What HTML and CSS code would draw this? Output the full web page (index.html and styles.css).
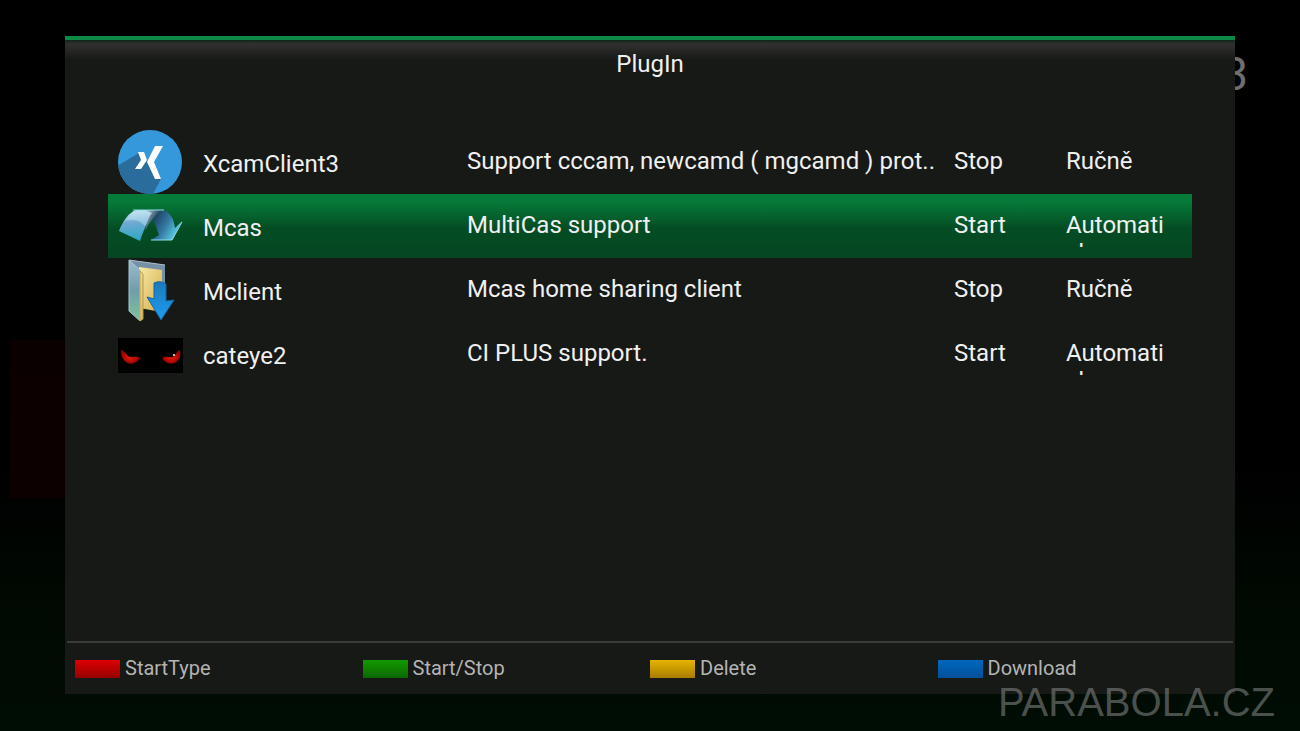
FILE: index.html
```
<!DOCTYPE html>
<html lang="cs">
<head>
    <meta charset="UTF-8">
    <meta name="viewport" content="width=device-width, initial-scale=1.0">
    <title>PlugIn</title>
    <link rel="stylesheet" href="styles.css">
</head>
<body>
    <div class="channel">3</div>

    <main class="panel">
        <h1 class="title">PlugIn</h1>

        <table class="plugins">
            <colgroup>
                <col class="col-icon">
                <col class="col-name">
                <col class="col-desc">
                <col class="col-state">
                <col class="col-type">
            </colgroup>
            <tbody>
                <tr>
                    <td class="icon">
                        <svg width="66" height="64" viewBox="1 0 66 64">
                            <defs>
                                <clipPath id="disc"><circle cx="33" cy="32" r="32"/></clipPath>
                            </defs>
                            <circle cx="33" cy="32" r="32" fill="#3498db"/>
                            <path clip-path="url(#disc)" fill="#2a6c9b" d="M22 23L0 36V64H36L44 49L31 31Z"/>
                            <path fill="#fff" d="M21 22h6l3 8-6 9h-6l6-9zM38 16h8l-9 16 7 17h-6l-8-17z"/>
                        </svg>
                    </td>
                    <td class="name">XcamClient3</td>
                    <td><div class="cell">Support cccam, newcamd ( mgcamd ) prot..</div></td>
                    <td><div class="cell">Stop</div></td>
                    <td><div class="cell type">Ručně</div></td>
                </tr>
                <tr class="selected">
                    <td class="icon">
                        <svg width="66" height="64" viewBox="0 0 66 64">
                            <defs>
                                <linearGradient id="bandLeft" x1="0.4" y1="0" x2="0.5" y2="1">
                                    <stop offset="0" stop-color="#c3e2f0"/>
                                    <stop offset="0.4" stop-color="#6fa9d2"/>
                                    <stop offset="1" stop-color="#27a9c2"/>
                                </linearGradient>
                                <linearGradient id="bandFold" x1="0" y1="0" x2="1" y2="0.6">
                                    <stop offset="0" stop-color="#c9ddea"/>
                                    <stop offset="0.6" stop-color="#2b4c66"/>
                                    <stop offset="1" stop-color="#163347"/>
                                </linearGradient>
                                <linearGradient id="bandRight" x1="0" y1="0.2" x2="0.9" y2="0.7">
                                    <stop offset="0" stop-color="#16344f"/>
                                    <stop offset="0.55" stop-color="#3579a4"/>
                                    <stop offset="1" stop-color="#58d3e3"/>
                                </linearGradient>
                            </defs>
                            <path fill="url(#bandLeft)" d="M1 37C5 27 10 19 18 16H38C31 23 26 35 22 47Z"/>
                            <path fill="#c5eaf5" opacity="0.45" d="M7 27C15 24 23 27 27 32L36 17H18C14 18 11 22 7 27Z"/>
                            <path fill="url(#bandFold)" d="M26 16H46C38 20 32 27 27 37C29 28 31 22 34 19Z"/>
                            <path fill="url(#bandRight)" d="M35 26C37 21 41 18 46 16C53 19 56 26 57 34L64 27L54 46H33L41 41C39 36 38 31 35 26Z"/>
                            <path fill="none" stroke="#8de1ee" d="M15 16H46M33 46H54L64 28"/>
                        </svg>
                    </td>
                    <td class="name">Mcas</td>
                    <td><div class="cell">MultiCas support</div></td>
                    <td><div class="cell">Start</div></td>
                    <td><div class="cell type">Automaticky</div></td>
                </tr>
                <tr>
                    <td class="icon">
                        <svg width="66" height="64" viewBox="0 0 66 64">
                            <defs>
                                <linearGradient id="cover" x1="0" y1="0" x2="0" y2="1">
                                    <stop offset="0" stop-color="#9dbbd0"/>
                                    <stop offset="0.5" stop-color="#6f9dac"/>
                                    <stop offset="1" stop-color="#7cc79b"/>
                                </linearGradient>
                                <linearGradient id="paper" x1="0" y1="0" x2="1" y2="1">
                                    <stop offset="0" stop-color="#f6e9a4"/>
                                    <stop offset="1" stop-color="#d5ad4c"/>
                                </linearGradient>
                                <linearGradient id="arrow" x1="0" y1="0" x2="0" y2="1">
                                    <stop offset="0" stop-color="#1c79bd"/>
                                    <stop offset="1" stop-color="#1d9cf0"/>
                                </linearGradient>
                            </defs>
                            <path fill="#7690a5" d="M11 2L47 7V48L40 50L12 10Z"/>
                            <path fill="url(#paper)" d="M21 9L44 12V54L21 50Z"/>
                            <path fill="url(#cover)" stroke="#a9c8d0" d="M11 2L22 12V63L11 53Z"/>
                            <path fill="url(#paper)" stroke="#b99a50" d="M22 13L25 16V61L22 63Z"/>
                            <path fill="none" stroke="#a9c0d0" d="M11 2L47 7"/>
                            <path fill="url(#arrow)" stroke="#1565a8" d="M36 25Q42 22 48 26V43L56 42L43 62L29 39L36 41Z"/>
                        </svg>
                    </td>
                    <td class="name">Mclient</td>
                    <td><div class="cell">Mcas home sharing client</div></td>
                    <td><div class="cell">Stop</div></td>
                    <td><div class="cell type">Ručně</div></td>
                </tr>
                <tr>
                    <td class="icon">
                        <svg width="66" height="64" viewBox="0 0 66 64">
                            <defs>
                                <radialGradient id="eye">
                                    <stop offset="0" stop-color="#f01a10"/>
                                    <stop offset="1" stop-color="#9d0000"/>
                                </radialGradient>
                            </defs>
                            <path fill="#000" d="M0 16H65V51H0Z"/>
                            <path fill="url(#eye)" d="M3 28C7 29 9 34 12 35C16 36 18 33 22 36C18 42 12 43 8 40C4 37 3 33 3 28Z"/>
                            <path fill="url(#eye)" d="M62 28C58 29 58 34 55 35C51 36 48 33 44 36C48 42 54 43 58 40C62 37 63 33 62 28Z"/>
                            <path fill="#d8b0a0" d="M55 32h2v2h-2z"/>
                        </svg>
                    </td>
                    <td class="name">cateye2</td>
                    <td><div class="cell">CI PLUS support.</div></td>
                    <td><div class="cell">Start</div></td>
                    <td><div class="cell type">Automaticky</div></td>
                </tr>
            </tbody>
        </table>

        <footer class="keys">
            <button class="key" type="button"><span class="swatch red"></span>StartType</button>
            <button class="key" type="button"><span class="swatch green"></span>Start/Stop</button>
            <button class="key" type="button"><span class="swatch yellow"></span>Delete</button>
            <button class="key" type="button"><span class="swatch blue"></span>Download</button>
        </footer>
    </main>

    <div class="watermark">PARABOLA.CZ</div>
</body>
</html>
```
FILE: styles.css
```
* {
    box-sizing: border-box;
}

body {
    position: relative;
    display: flex;
    min-height: 100vh;
    margin: 0;
    padding: 36px 5% 37px;
    overflow: hidden;
    background:
        linear-gradient(#0b0000, #0d0000) 10px 340px / 56px 158px no-repeat,
        linear-gradient(#000 0%, #000 64%, #000a02 85%, #000d04 100%);
    color: #f0f0f0;
    font-family: Roboto, sans-serif;
    font-size: 24px;
}

/* what shows through behind the panel */
.channel {
    position: absolute;
    top: 46px;
    right: 52px;
    color: #6e6e6e;
    font-size: 46px;
    line-height: 56px;
}

.panel {
    position: relative;
    display: flex;
    flex: 1;
    flex-direction: column;
    border-top: 4px solid #0c8a45;
    background: linear-gradient(#10281a 0, #30302e 4px, #2b2b29 8px, #161915 20px, #161915 100%);
}

.title {
    margin: 0;
    padding: 10px 0 51px;
    font-size: 24px;
    font-weight: 400;
    line-height: 29px;
    text-align: center;
}

.plugins {
    margin: 0 43px auto;
    border-collapse: collapse;
    table-layout: fixed;
}

.plugins td {
    height: 64px;
    padding: 0;
    vertical-align: top;
}

.col-icon {
    width: 95px;
}

.col-name {
    width: 264px;
}

.col-state {
    width: 112px;
}

.col-type {
    width: 126px;
}

.plugins .icon {
    padding-left: 10px;
}

.icon svg {
    display: block;
}

.plugins .name {
    padding-top: 4px;
    vertical-align: middle;
}

.cell {
    height: 53px;
    padding-top: 17px;
    line-height: 28px;
    overflow: hidden;
    white-space: nowrap;
}

.type {
    width: 104px;
    white-space: normal;
    word-break: break-all;
}

.selected {
    background: linear-gradient(#067a38 0, #067a38 8px, #044d24 34px, #044622 100%);
}

.keys {
    display: grid;
    grid-template-columns: repeat(4, 1fr);
    margin: 0 2px;
    padding: 12px 8px;
    border-top: 2px solid #3b3c39;
}

.key {
    display: flex;
    align-items: center;
    gap: 5px;
    padding: 0;
    border: 0;
    background: none;
    color: #b4b4b4;
    font-family: inherit;
    font-size: 20px;
    line-height: 27px;
}

.swatch {
    width: 45px;
    height: 18px;
}

.red {
    background: linear-gradient(#dc0000, #960000);
}

.green {
    background: linear-gradient(#139a00, #0b6800);
}

.yellow {
    background: linear-gradient(#e6b400, #a87c00);
}

.blue {
    background: linear-gradient(#0068bd, #00509a);
}

.watermark {
    position: absolute;
    right: 25px;
    bottom: 6px;
    color: rgba(140, 140, 140, 0.55);
    font-family: "Liberation Sans Narrow", "Liberation Sans", sans-serif;
    font-size: 40px;
    line-height: 46px;
}
```
